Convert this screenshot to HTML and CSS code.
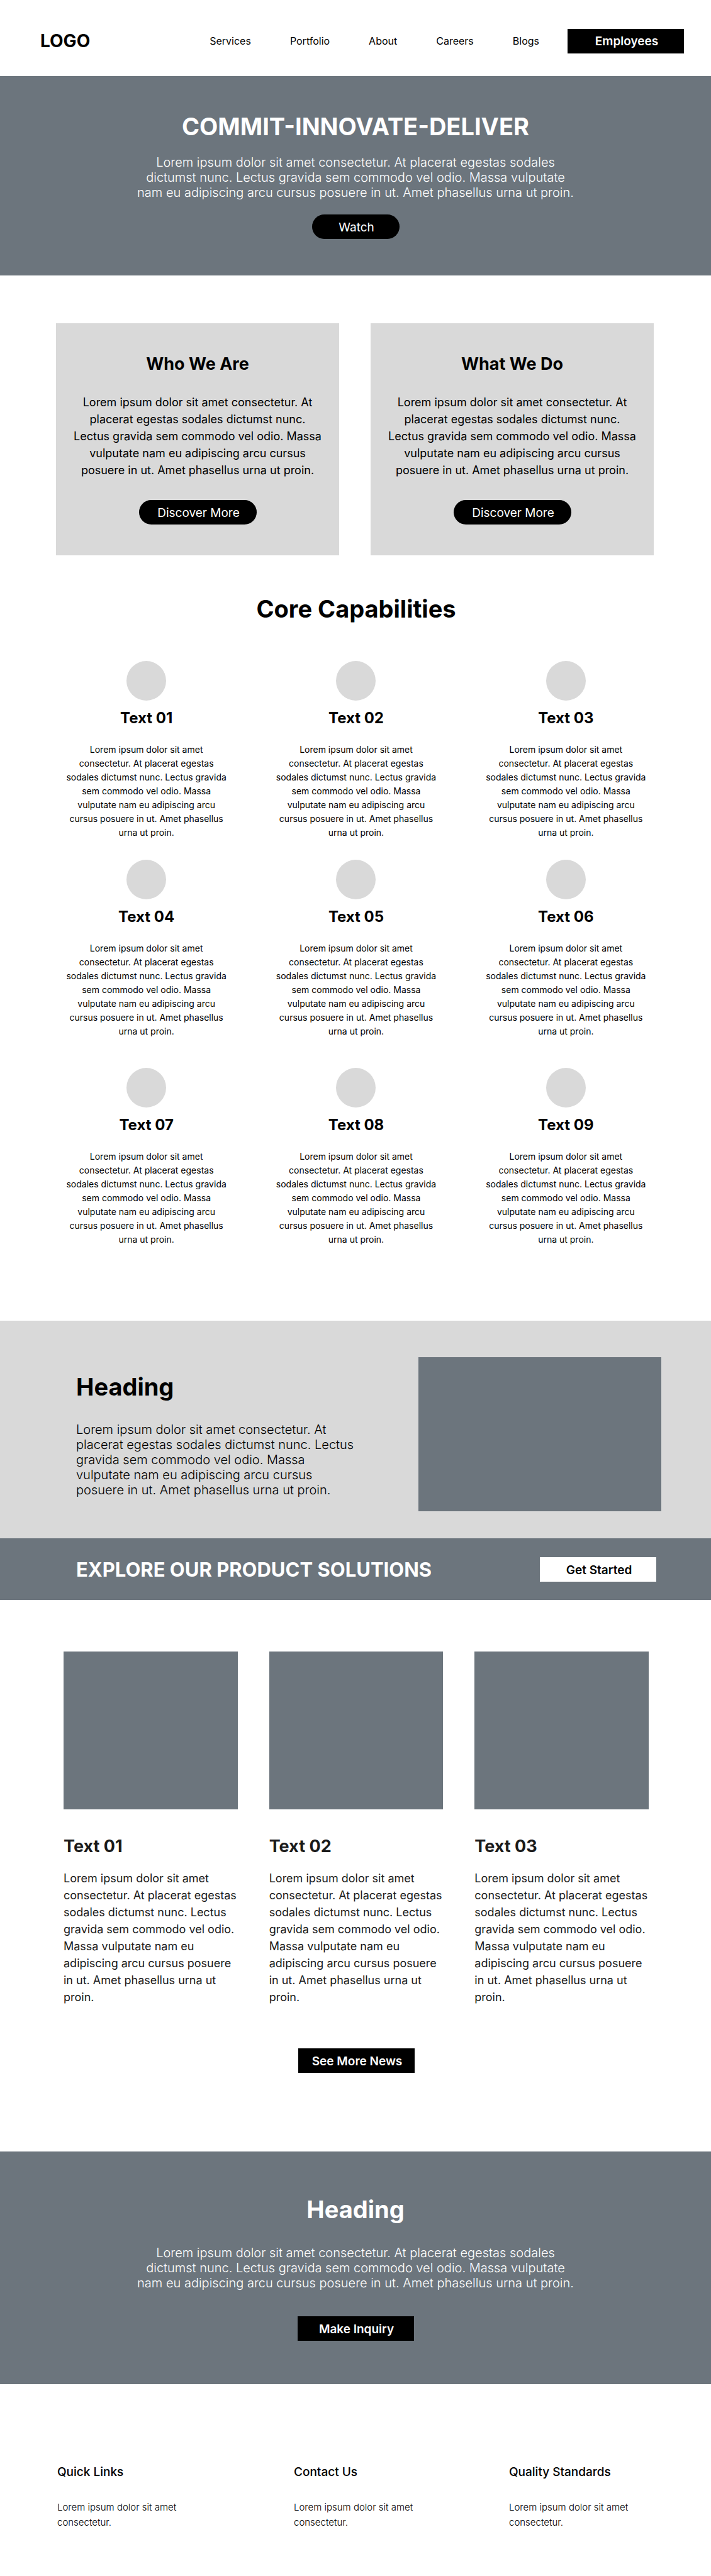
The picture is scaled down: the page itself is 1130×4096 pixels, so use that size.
FILE: index.html
```html
<!DOCTYPE html>
<html lang="en">
<head>
<meta charset="utf-8">
<meta name="viewport" content="width=device-width, initial-scale=1">
<title>Commit-Innovate-Deliver</title>
<link rel="stylesheet" href="styles.css">
</head>
<body>
<header class="site-header">
  <a class="logo" href="#">LOGO</a>
  <nav class="nav">
    <a href="#">Services</a>
    <a href="#">Portfolio</a>
    <a href="#">About</a>
    <a href="#">Careers</a>
    <a href="#">Blogs</a>
  </nav>
  <button class="btn" type="button">Employees</button>
</header>
<main>
  <section class="hero">
    <h1>COMMIT-INNOVATE-DELIVER</h1>
    <p class="lead">Lorem ipsum dolor sit amet consectetur. At placerat egestas sodales dictumst nunc. Lectus gravida sem commodo vel odio. Massa vulputate nam eu adipiscing arcu cursus posuere in ut. Amet phasellus urna ut proin.</p>
    <button class="btn pill pill-small" type="button">Watch</button>
  </section>

  <section class="about">
    <article class="about-card">
      <h2>Who We Are</h2>
      <p>Lorem ipsum dolor sit amet consectetur. At placerat egestas sodales dictumst nunc. Lectus gravida sem commodo vel odio. Massa vulputate nam eu adipiscing arcu cursus posuere in ut. Amet phasellus urna ut proin.</p>
      <button class="btn pill" type="button">Discover More</button>
    </article>
    <article class="about-card">
      <h2>What We Do</h2>
      <p>Lorem ipsum dolor sit amet consectetur. At placerat egestas sodales dictumst nunc. Lectus gravida sem commodo vel odio. Massa vulputate nam eu adipiscing arcu cursus posuere in ut. Amet phasellus urna ut proin.</p>
      <button class="btn pill" type="button">Discover More</button>
    </article>
  </section>

  <section class="capabilities">
    <h2 class="title">Core Capabilities</h2>
    <div class="cap-grid">
      <article class="cap"><span class="dot"></span><h3>Text 01</h3><p>Lorem ipsum dolor sit amet consectetur. At placerat egestas sodales dictumst nunc. Lectus gravida sem commodo vel odio. Massa vulputate nam eu adipiscing arcu cursus posuere in ut. Amet phasellus urna ut proin.</p></article>
      <article class="cap"><span class="dot"></span><h3>Text 02</h3><p>Lorem ipsum dolor sit amet consectetur. At placerat egestas sodales dictumst nunc. Lectus gravida sem commodo vel odio. Massa vulputate nam eu adipiscing arcu cursus posuere in ut. Amet phasellus urna ut proin.</p></article>
      <article class="cap"><span class="dot"></span><h3>Text 03</h3><p>Lorem ipsum dolor sit amet consectetur. At placerat egestas sodales dictumst nunc. Lectus gravida sem commodo vel odio. Massa vulputate nam eu adipiscing arcu cursus posuere in ut. Amet phasellus urna ut proin.</p></article>
      <article class="cap"><span class="dot"></span><h3>Text 04</h3><p>Lorem ipsum dolor sit amet consectetur. At placerat egestas sodales dictumst nunc. Lectus gravida sem commodo vel odio. Massa vulputate nam eu adipiscing arcu cursus posuere in ut. Amet phasellus urna ut proin.</p></article>
      <article class="cap"><span class="dot"></span><h3>Text 05</h3><p>Lorem ipsum dolor sit amet consectetur. At placerat egestas sodales dictumst nunc. Lectus gravida sem commodo vel odio. Massa vulputate nam eu adipiscing arcu cursus posuere in ut. Amet phasellus urna ut proin.</p></article>
      <article class="cap"><span class="dot"></span><h3>Text 06</h3><p>Lorem ipsum dolor sit amet consectetur. At placerat egestas sodales dictumst nunc. Lectus gravida sem commodo vel odio. Massa vulputate nam eu adipiscing arcu cursus posuere in ut. Amet phasellus urna ut proin.</p></article>
    </div>
    <div class="cap-grid">
      <article class="cap"><span class="dot"></span><h3>Text 07</h3><p>Lorem ipsum dolor sit amet consectetur. At placerat egestas sodales dictumst nunc. Lectus gravida sem commodo vel odio. Massa vulputate nam eu adipiscing arcu cursus posuere in ut. Amet phasellus urna ut proin.</p></article>
      <article class="cap"><span class="dot"></span><h3>Text 08</h3><p>Lorem ipsum dolor sit amet consectetur. At placerat egestas sodales dictumst nunc. Lectus gravida sem commodo vel odio. Massa vulputate nam eu adipiscing arcu cursus posuere in ut. Amet phasellus urna ut proin.</p></article>
      <article class="cap"><span class="dot"></span><h3>Text 09</h3><p>Lorem ipsum dolor sit amet consectetur. At placerat egestas sodales dictumst nunc. Lectus gravida sem commodo vel odio. Massa vulputate nam eu adipiscing arcu cursus posuere in ut. Amet phasellus urna ut proin.</p></article>
    </div>
  </section>

  <section class="feature">
    <div class="feature-text">
      <h2 class="title">Heading</h2>
      <p>Lorem ipsum dolor sit amet consectetur. At placerat egestas sodales dictumst nunc. Lectus gravida sem commodo vel odio. Massa vulputate nam eu adipiscing arcu cursus posuere in ut. Amet phasellus urna ut proin.</p>
    </div>
    <div class="feature-image"></div>
  </section>

  <section class="banner">
    <h2>EXPLORE OUR PRODUCT SOLUTIONS</h2>
    <button class="btn btn-light" type="button">Get Started</button>
  </section>

  <section class="news">
    <div class="news-grid">
      <article class="news-card"><div class="thumb"></div><h3>Text 01</h3><p>Lorem ipsum dolor sit amet consectetur. At placerat egestas sodales dictumst nunc. Lectus gravida sem commodo vel odio. Massa vulputate nam eu adipiscing arcu cursus posuere in ut. Amet phasellus urna ut proin.</p></article>
      <article class="news-card"><div class="thumb"></div><h3>Text 02</h3><p>Lorem ipsum dolor sit amet consectetur. At placerat egestas sodales dictumst nunc. Lectus gravida sem commodo vel odio. Massa vulputate nam eu adipiscing arcu cursus posuere in ut. Amet phasellus urna ut proin.</p></article>
      <article class="news-card"><div class="thumb"></div><h3>Text 03</h3><p>Lorem ipsum dolor sit amet consectetur. At placerat egestas sodales dictumst nunc. Lectus gravida sem commodo vel odio. Massa vulputate nam eu adipiscing arcu cursus posuere in ut. Amet phasellus urna ut proin.</p></article>
    </div>
    <button class="btn" type="button">See More News</button>
  </section>

  <section class="inquiry">
    <h2 class="title">Heading</h2>
    <p class="lead">Lorem ipsum dolor sit amet consectetur. At placerat egestas sodales dictumst nunc. Lectus gravida sem commodo vel odio. Massa vulputate nam eu adipiscing arcu cursus posuere in ut. Amet phasellus urna ut proin.</p>
    <button class="btn" type="button">Make Inquiry</button>
  </section>
</main>
<footer class="site-footer">
  <div class="foot-col"><h4>Quick Links</h4><p>Lorem ipsum dolor sit amet consectetur.</p></div>
  <div class="foot-col"><h4>Contact Us</h4><p>Lorem ipsum dolor sit amet consectetur.</p></div>
  <div class="foot-col"><h4>Quality Standards</h4><p>Lorem ipsum dolor sit amet consectetur.</p></div>
</footer>
</body>
</html>
```
FILE: styles.css
```css
:root {
  --slate: #6c757d;
  --silver: #d9d9d9;
}

* {
  box-sizing: border-box;
}

body {
  margin: 0;
  background: #fff;
  color: #000;
  font-family: Inter, "Liberation Sans", sans-serif;
  font-size: 18px;
  line-height: 27px;
}

h1, h2, h3, h4, p {
  margin: 0;
}

a {
  color: inherit;
  text-decoration: none;
}

.btn {
  width: 185px;
  height: 39px;
  padding: 2px 0 0 3px;
  border: 0;
  background: #000;
  color: #fff;
  font: 600 19px/24px Inter, "Liberation Sans", sans-serif;
}

.btn-light {
  background: #fff;
  color: #000;
}

.pill {
  width: 187px;
  border-radius: 20px;
  font-weight: 400;
}

.pill-small {
  width: 139px;
}

.title,
.hero h1 {
  font-size: 38px;
  line-height: 46px;
  font-weight: 700;
}

.lead,
.feature-text p {
  font-size: 20px;
  line-height: 24px;
  font-weight: 300;
}

.lead {
  max-width: 700px;
}

/* Header */
.site-header {
  display: flex;
  align-items: center;
  padding: 41px 43px 32px 64px;
}

.logo {
  margin-right: auto;
  font-size: 28px;
  line-height: 48px;
  font-weight: 700;
}

.nav {
  display: flex;
  gap: 62px;
  margin-right: 45px;
  font-size: 16px;
}

/* Hero */
.hero,
.inquiry {
  display: flex;
  flex-direction: column;
  align-items: center;
  background: var(--slate);
  color: #fff;
  text-align: center;
}

.hero {
  padding: 57px 24px 58px;
}

.hero .lead {
  margin: 22px 0 23px;
}

/* About cards */
.about {
  display: grid;
  grid-template-columns: 1fr 1fr;
  gap: 50px;
  padding: 76px 91px 0 89px;
}

.about-card {
  display: flex;
  flex-direction: column;
  align-items: center;
  padding: 49px 24px;
  background: var(--silver);
  text-align: center;
}

.about-card h2,
.news-card h3 {
  font-size: 27px;
  line-height: 32px;
}

.about-card p {
  margin: 31px 0 34px;
}

/* Capabilities */
.capabilities {
  padding: 62px 64px 118px 66px;
  text-align: center;
}

.cap-grid {
  display: grid;
  grid-template-columns: repeat(3, 1fr);
  row-gap: 32px;
  padding-top: 60px;
}

.cap-grid + .cap-grid {
  padding-top: 47px;
}

.cap {
  display: flex;
  flex-direction: column;
  align-items: center;
}

.dot {
  width: 63px;
  height: 63px;
  border-radius: 50%;
  background: var(--silver);
}

.cap h3 {
  margin: 13px 0 24px;
  font-size: 24px;
  line-height: 30px;
}

.cap p {
  max-width: 264px;
  font-size: 14px;
  line-height: 22px;
}

/* Feature */
.feature {
  display: flex;
  justify-content: space-between;
  gap: 40px;
  padding: 58px 79px 43px 121px;
  background: var(--silver);
}

.feature-text {
  flex: 1;
  max-width: 450px;
  padding-top: 24px;
}

.feature-text p {
  margin-top: 33px;
}

.feature-image {
  flex: 0 0 386px;
  height: 245px;
  background: var(--slate);
}

.banner {
  display: flex;
  align-items: center;
  justify-content: space-between;
  padding: 30px 87px 29px 121px;
  background: var(--slate);
  color: #fff;
}

.banner h2 {
  font-size: 31px;
  line-height: 39px;
}

/* News */
.news {
  display: flex;
  flex-direction: column;
  align-items: center;
  gap: 68px;
  padding: 82px 99px 125px 101px;
}

.news-grid {
  display: grid;
  grid-template-columns: repeat(3, 1fr);
  gap: 50px;
  width: 100%;
}

.news-card {
  color: #1a1a1a;
}

.thumb {
  height: 251px;
  background: var(--slate);
}

.news-card h3 {
  margin: 43px 0 21px;
}

/* Inquiry */
.inquiry {
  padding: 69px 24px;
}

.inquiry .lead {
  margin: 34px 0 41px;
}

/* Footer */
.site-footer {
  display: grid;
  grid-template-columns: 376fr 342fr 230fr;
  padding: 128px 91px 73px;
}

.foot-col h4 {
  margin-bottom: 32px;
  font-size: 19px;
  line-height: 24px;
  font-weight: 500;
}

.foot-col p {
  max-width: 220px;
  font-size: 15px;
  line-height: 24px;
  font-weight: 300;
}
```
